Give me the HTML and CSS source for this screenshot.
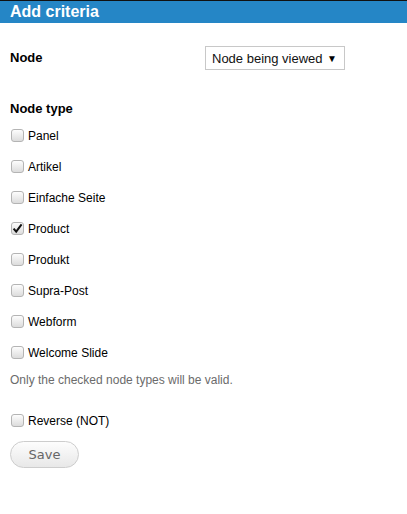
FILE: index.html
```html
<!DOCTYPE html>
<html>
<head>
<meta charset="utf-8">
<title>Add criteria</title>
<link rel="stylesheet" href="styles.css">
</head>
<body>
<div class="dialog">
  <h1 class="title">Add criteria</h1>
  <form class="form">
    <div class="field-row">
      <label class="field-label">Node</label>
      <div class="select">
        <span class="select-value">Node being viewed</span>
        <span class="select-arrow">&#9660;</span>
      </div>
    </div>

    <div class="group">
      <div class="field-label group-title">Node type</div>
      <ul class="options">
        <li class="option"><span class="box"></span><span>Panel</span></li>
        <li class="option"><span class="box"></span><span>Artikel</span></li>
        <li class="option"><span class="box"></span><span>Einfache Seite</span></li>
        <li class="option"><span class="box checked"><svg viewBox="0 0 13 13" width="13" height="13"><path d="M2.6 6.6 L5.2 9.6 L10.6 2.4" fill="none" stroke="#111" stroke-width="2"/></svg></span><span>Product</span></li>
        <li class="option"><span class="box"></span><span>Produkt</span></li>
        <li class="option"><span class="box"></span><span>Supra-Post</span></li>
        <li class="option"><span class="box"></span><span>Webform</span></li>
        <li class="option"><span class="box"></span><span>Welcome Slide</span></li>
      </ul>
      <p class="description">Only the checked node types will be valid.</p>
    </div>

    <div class="option reverse"><span class="box"></span><span>Reverse (NOT)</span></div>

    <button type="button" class="button">Save</button>
  </form>
</div>
</body>
</html>
```

FILE: styles.css
```css
html, body {
  margin: 0;
  padding: 0;
  background: #fff;
}

body {
  font-family: "Liberation Sans", Arial, sans-serif;
  color: #000;
}

.title {
  margin: 0;
  height: 22px;
  border-top: 1px solid #111;
  background: #2586c6;
  color: #fff;
  font-size: 16px;
  font-weight: bold;
  line-height: 21px;
  padding-left: 10px;
}

.form {
  padding: 23px 10px 0 10px;
}

.field-row {
  display: flex;
  align-items: center;
  height: 24px;
}

.field-label {
  font-size: 13px;
  font-weight: bold;
  line-height: 16px;
}

.field-row .field-label {
  width: 195px;
}

.select {
  box-sizing: border-box;
  width: 140px;
  height: 24px;
  border: 1px solid #c8c8c8;
  display: flex;
  align-items: center;
  justify-content: space-between;
  padding: 0 7px 0 6px;
  font-size: 13px;
  color: #111;
}

.select-arrow {
  font-size: 10px;
  color: #000;
}

.group {
  margin-top: 31px;
}

.group-title {
  margin-bottom: 3px;
}

.options {
  list-style: none;
  margin: 0;
  padding: 0;
}

.option {
  display: flex;
  align-items: center;
  height: 31px;
  font-size: 12px;
  color: #000;
}

.box {
  box-sizing: border-box;
  width: 13px;
  height: 13px;
  margin: 0 4px 0 1px;
  border: 1px solid #b4b4b4;
  border-radius: 3px;
  background: linear-gradient(#fdfdfd, #dcdcdc);
  display: flex;
  align-items: center;
  justify-content: center;
}

.box.checked svg {
  margin: -1px;
}

.description {
  margin: 5px 0 0 0;
  font-size: 12px;
  line-height: 14px;
  color: #6b6b6b;
}

.reverse {
  margin-top: 18px;
}

.button {
  margin-top: 5px;
  width: 69px;
  height: 27px;
  border: 1px solid #cdcdcd;
  border-radius: 14px;
  background: linear-gradient(#fdfdfd, #e8e8e8);
  font-family: "DejaVu Sans", Verdana, sans-serif;
  font-size: 13px;
  color: #666;
  padding: 0;
}
```
